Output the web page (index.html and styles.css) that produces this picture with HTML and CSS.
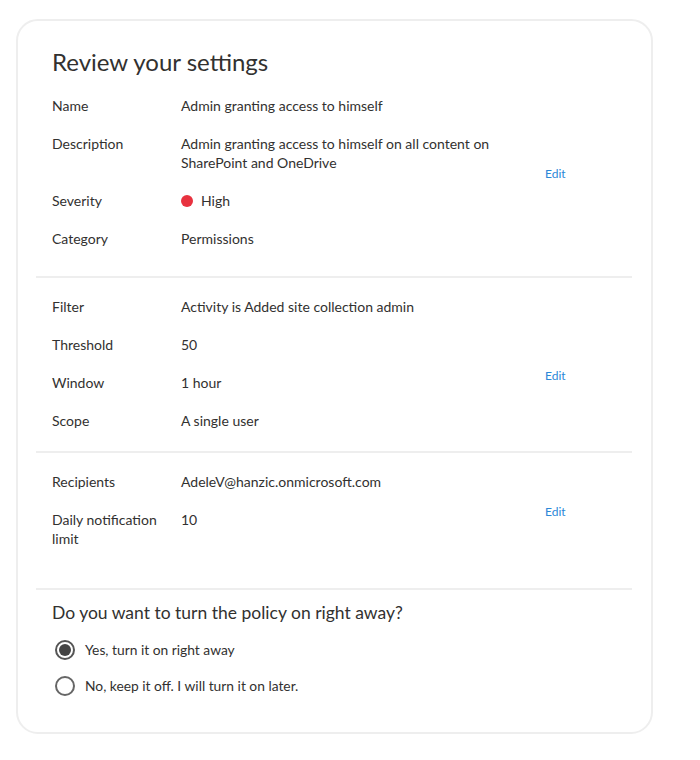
FILE: index.html
```html
<!DOCTYPE html>
<html lang="en">
<head>
<meta charset="utf-8">
<title>Review your settings</title>
<link rel="stylesheet" href="styles.css">
</head>
<body>
<div class="card">
  <section class="group group-first">
    <h1 class="title">Review your settings</h1>
    <div class="group-body">
      <dl class="rows">
        <div class="row"><dt>Name</dt><dd>Admin granting access to himself</dd></div>
        <div class="row"><dt>Description</dt><dd>Admin granting access to himself on all content on SharePoint and OneDrive</dd></div>
        <div class="row"><dt>Severity</dt><dd><span class="dot"></span>High</dd></div>
        <div class="row"><dt>Category</dt><dd>Permissions</dd></div>
      </dl>
      <a class="edit" href="#">Edit</a>
    </div>
  </section>
  <section class="group group-mid">
    <div class="group-body">
      <dl class="rows">
        <div class="row"><dt>Filter</dt><dd>Activity is Added site collection admin</dd></div>
        <div class="row"><dt>Threshold</dt><dd>50</dd></div>
        <div class="row"><dt>Window</dt><dd>1 hour</dd></div>
        <div class="row"><dt>Scope</dt><dd>A single user</dd></div>
      </dl>
      <a class="edit edit-low" href="#">Edit</a>
    </div>
  </section>
  <section class="group group-last">
    <div class="group-body">
      <dl class="rows">
        <div class="row"><dt>Recipients</dt><dd>AdeleV@hanzic.onmicrosoft.com</dd></div>
        <div class="row"><dt>Daily notification limit</dt><dd>10</dd></div>
      </dl>
      <a class="edit" href="#">Edit</a>
    </div>
  </section>
  <section class="question">
    <h2 class="q-title">Do you want to turn the policy on right away?</h2>
    <div class="options">
      <label class="option"><span class="radio checked"></span>Yes, turn it on right away</label>
      <label class="option"><span class="radio"></span>No, keep it off. I will turn it on later.</label>
    </div>
  </section>
</div>
</body>
</html>
```

FILE: styles.css
```css
* { box-sizing: border-box; }
body {
  margin: 0;
  background: #ffffff;
  font-family: "Lato", "Open Sans", sans-serif;
  color: #323130;
}
.card {
  margin: 19px 0 0 16px;
  width: 637px;
  border: 2px solid #eeeeee;
  border-radius: 22px;
  padding: 0 19px 36px 18px;
  background: #fff;
}
.group {
  border-bottom: 2px solid #eeeeee;
  padding: 0 16px;
}
.group-first { padding-top: 27px; padding-bottom: 28px; }
.group-mid { padding-top: 19px; padding-bottom: 21px; }
.group-last { padding-top: 19px; padding-bottom: 40px; }
.title {
  margin: 0 0 20px;
  font-size: 24px;
  line-height: 28px;
  font-weight: 400;
  color: #323130;
}
.group-body {
  display: flex;
  align-items: center;
}
.rows {
  margin: 0;
  width: 493px;
  display: flex;
  flex-direction: column;
  gap: 19px;
}
.row {
  display: flex;
  align-items: flex-start;
  font-size: 14px;
  line-height: 19px;
}
.row dt {
  width: 129px;
  flex: none;
  padding-right: 12px;
}
.row dd {
  margin: 0;
  flex: 1;
  padding-right: 14px;
}
.dot {
  display: inline-block;
  vertical-align: -1px;
  width: 12px;
  height: 12px;
  border-radius: 50%;
  background: #e8323f;
  margin-right: 8px;
}
.edit {
  font-size: 12px;
  color: #2b88d8;
  text-decoration: none;
  margin-top: 2px;
}
.edit-low { margin-top: 24px; }
.question {
  padding: 12px 16px 0;
}
.q-title {
  margin: 0 0 16px;
  font-size: 17.5px;
  line-height: 22px;
  font-weight: 400;
  color: #323130;
}
.options {
  display: flex;
  flex-direction: column;
  gap: 16px;
}
.option {
  display: flex;
  align-items: center;
  font-size: 13.8px;
  line-height: 20px;
  gap: 10px;
  margin-left: 3px;
}
.radio {
  width: 20px;
  height: 20px;
  border-radius: 50%;
  border: 2px solid #666666;
  display: flex;
  align-items: center;
  justify-content: center;
}
.radio.checked { border-color: #555555; }
.radio.checked::after {
  content: "";
  width: 12px;
  height: 12px;
  border-radius: 50%;
  background: #444444;
}
```
